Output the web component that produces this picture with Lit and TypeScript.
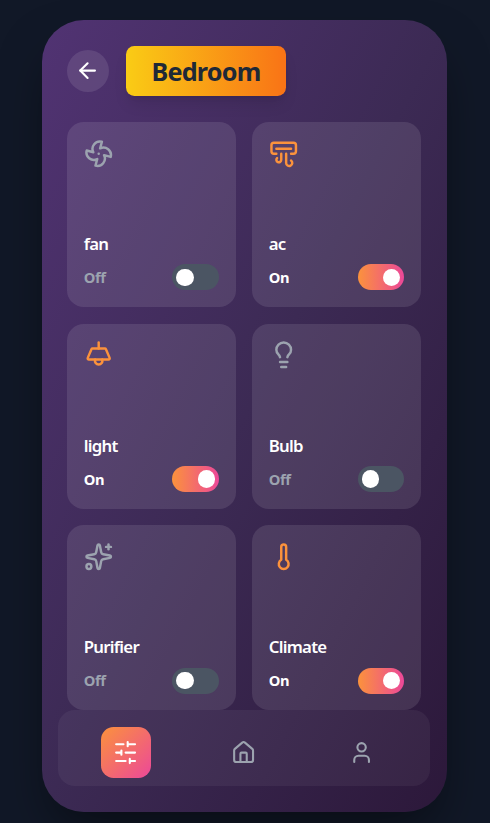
import { LitElement, html, svg, css } from "lit";
import { customElement, property, state } from "lit/decorators.js";
import { classMap } from "lit/directives/class-map.js";

const ICONS: Record<string, any> = {
  back: svg`<path d="m12 19-7-7 7-7"/><path d="M19 12H5"/>`,
  fan: svg`<path d="M10.827 16.379a6.082 6.082 0 0 1-8.618-7.002l5.412 1.45a6.082 6.082 0 0 1 7.002-8.618l-1.45 5.412a6.082 6.082 0 0 1 8.618 7.002l-5.412-1.45a6.082 6.082 0 0 1-7.002 8.618l1.45-5.412Z"/><path d="M12 12v.01"/>`,
  ac: svg`<path d="M18 17.5a2.5 2.5 0 1 1-4 2.03V12"/><path d="M6 12H4a2 2 0 0 1-2-2V5a2 2 0 0 1 2-2h16a2 2 0 0 1 2 2v5a2 2 0 0 1-2 2h-2"/><path d="M6 8h12"/><path d="M6.6 15.572A2 2 0 1 0 10 17v-5"/>`,
  light: svg`<path d="M12 2v5"/><path d="M14.829 15.998a3 3 0 1 1-5.658 0"/><path d="M20.92 14.606A1 1 0 0 1 20 16H4a1 1 0 0 1-.92-1.394l3-7A1 1 0 0 1 7 7h10a1 1 0 0 1 .92.606z"/>`,
  bulb: svg`<path d="M15 14c.2-1 .7-1.7 1.5-2.5 1-.9 1.5-2.2 1.5-3.5A6 6 0 0 0 6 8c0 1 .2 2.2 1.5 3.5.7.7 1.3 1.5 1.5 2.5"/><path d="M9 18h6"/><path d="M10 22h4"/>`,
  purifier: svg`<path d="M11.017 2.814a1 1 0 0 1 1.966 0l1.051 5.558a2 2 0 0 0 1.594 1.594l5.558 1.051a1 1 0 0 1 0 1.966l-5.558 1.051a2 2 0 0 0-1.594 1.594l-1.051 5.558a1 1 0 0 1-1.966 0l-1.051-5.558a2 2 0 0 0-1.594-1.594l-5.558-1.051a1 1 0 0 1 0-1.966l5.558-1.051a2 2 0 0 0 1.594-1.594z"/><path d="M20 2v4"/><path d="M22 4h-4"/><circle cx="4" cy="20" r="2"/>`,
  climate: svg`<path d="M14 4v10.54a4 4 0 1 1-4 0V4a2 2 0 0 1 4 0Z"/>`,
  sliders: svg`<path d="M21 4h-7M10 4H3M21 12h-9M8 12H3M21 20h-5M12 20H3M14 2v4M8 10v4M16 18v4"/>`,
  home: svg`<path d="M15 21v-8a1 1 0 0 0-1-1h-4a1 1 0 0 0-1 1v8"/><path d="M3 10a2 2 0 0 1 .709-1.528l7-5.999a2 2 0 0 1 2.582 0l7 5.999A2 2 0 0 1 21 10v9a2 2 0 0 1-2 2H5a2 2 0 0 1-2-2z"/>`,
  user: svg`<path d="M19 21v-2a4 4 0 0 0-4-4H9a4 4 0 0 0-4 4v2"/><circle cx="12" cy="7" r="4"/>`,
};

@customElement("line-icon")
class LineIcon extends LitElement {
  @property() name = "";
  static styles = css`
    :host { display: block; width: 25.2px; height: 25.2px; }
    .glyph {
      display: block; width: 100%; height: 100%; fill: none; stroke: currentColor;
      stroke-width: 2; stroke-linecap: round; stroke-linejoin: round;
    }
  `;
  render() {
    return html`<svg class="glyph" viewBox="0 0 24 24">${ICONS[this.name]}</svg>`;
  }
}

@customElement("device-card")
class DeviceCard extends LitElement {
  @property() icon = "";
  @property() label = "";
  @property({ type: Boolean }) on = false;
  static styles = css`
    :host {
      display: flex; flex-direction: column; justify-content: space-between;
      box-sizing: border-box; height: 185px; padding: 16.8px 16.8px 16.5px;
      border-radius: 16.8px; background: rgba(255, 255, 255, 0.1);
    }
    .icon { width: 29.4px; height: 29.4px; color: #9ca3af; }
    .icon.on { color: #fb923c; }
    .name {
      font-size: 16.8px; line-height: 25.2px; font-weight: 650; color: #fff;
      letter-spacing: -0.75px; margin-bottom: 8.2px;
    }
    .row { display: flex; align-items: center; justify-content: space-between; }
    .status {
      font-size: 14.7px; line-height: 21px; font-weight: 700;
      letter-spacing: -0.4px; color: #9ca3af;
    }
    .status.on { color: #fff; }
    .toggle {
      display: flex; align-items: center; box-sizing: border-box;
      width: 46.6px; height: 26px; padding: 0 4.2px; border: 0;
      border-radius: 13px; background: #4b5563;
    }
    .toggle.on {
      justify-content: flex-end;
      background: linear-gradient(to right, #fb923c, #ec4899);
    }
    :host(:nth-child(odd)) .toggle { width: 47px; }
    .knob { width: 17.2px; height: 17.2px; border-radius: 50%; background: #fff; }
  `;
  render() {
    const on = this.on;
    return html`
      <line-icon class=${classMap({ icon: true, on })} name=${this.icon}></line-icon>
      <div>
        <div class="name">${this.label}</div>
        <div class="row">
          <span class=${classMap({ status: true, on })}>${on ? "On" : "Off"}</span>
          <button class=${classMap({ toggle: true, on })} @click=${() => (this.on = !this.on)}>
            <span class="knob"></span>
          </button>
        </div>
      </div>
    `;
  }
}

@customElement("app-root")
class AppRoot extends LitElement {
  @state() tab = "sliders";
  devices = [
    { icon: "fan", label: "fan", on: false },
    { icon: "ac", label: "ac", on: true },
    { icon: "light", label: "light", on: true },
    { icon: "bulb", label: "Bulb", on: false },
    { icon: "purifier", label: "Purifier", on: false },
    { icon: "climate", label: "Climate", on: true },
  ];
  static styles = css`
    :host {
      display: block; box-sizing: border-box; height: 823px; overflow: hidden;
      padding: 20px 43px 0 42px; background: #111827;
      font-family: "Segoe UI", "Noto Sans", "Open Sans", sans-serif;
    }
    .phone {
      display: flex; flex-direction: column; box-sizing: border-box;
      height: 792px; padding: 25.6px 17px 25.6px 16px; border-radius: 42px;
      background: linear-gradient(to bottom right, #513373 0%, #3c2a54 50%, #2c183a 100%);
      box-shadow: 0 26px 52px -12px rgba(0, 0, 0, 0.5);
    }
    .head { display: flex; align-items: center; gap: 17px; padding: 0 9px; }
    .back {
      display: grid; place-items: center; width: 42px; height: 42px; padding: 0 1.6px 0 0;
      border: 0; border-radius: 50%; color: #fff; background: rgba(255, 255, 255, 0.1);
    }
    .title {
      display: flex; align-items: center; justify-content: center;
      box-sizing: border-box; margin: 0; width: 160px; height: 50.4px; padding-top: 2px;
      font-size: 25.2px; line-height: 33.6px; font-weight: 700; color: #1f2937;
      letter-spacing: -0.8px; border-radius: 8.4px;
      background: linear-gradient(to right, #facc15, #f97316);
      box-shadow: 0 10px 16px -3px rgba(0, 0, 0, 0.1), 0 4px 6px -4px rgba(0, 0, 0, 0.1);
    }
    .grid {
      display: grid; grid-template-columns: 1fr 1fr; gap: 16.6px 16px;
      padding: 26px 9px 0;
    }
    .nav {
      display: grid; grid-template-columns: repeat(3, 118px); justify-content: center;
      justify-items: center; align-items: center; flex: none; box-sizing: border-box;
      height: 76px; padding-top: 9px;
      border-radius: 16.8px; background: rgba(255, 255, 255, 0.05);
    }
    .tab {
      display: grid; place-items: center; width: 50.4px; height: 50.4px; padding: 0 0.8px 0 0;
      border: 0; border-radius: 12.6px; background: none; color: #9ca3af;
    }
    .tab.active { color: #fff; background: linear-gradient(to bottom right, #fb923c, #ec4899); }
  `;
  render() {
    return html`
      <main class="phone">
        <header class="head">
          <button class="back"><line-icon name="back"></line-icon></button>
          <h1 class="title">Bedroom</h1>
        </header>
        <section class="grid">
          ${this.devices.map((d) => html`<device-card .icon=${d.icon} .label=${d.label} .on=${d.on}></device-card>`)}
        </section>
        <nav class="nav">
          ${["sliders", "home", "user"].map(
            (t) => html`<button class=${classMap({ tab: true, active: t === this.tab })} @click=${() => (this.tab = t)}>
              <line-icon name=${t}></line-icon>
            </button>`
          )}
        </nav>
      </main>
    `;
  }
}
